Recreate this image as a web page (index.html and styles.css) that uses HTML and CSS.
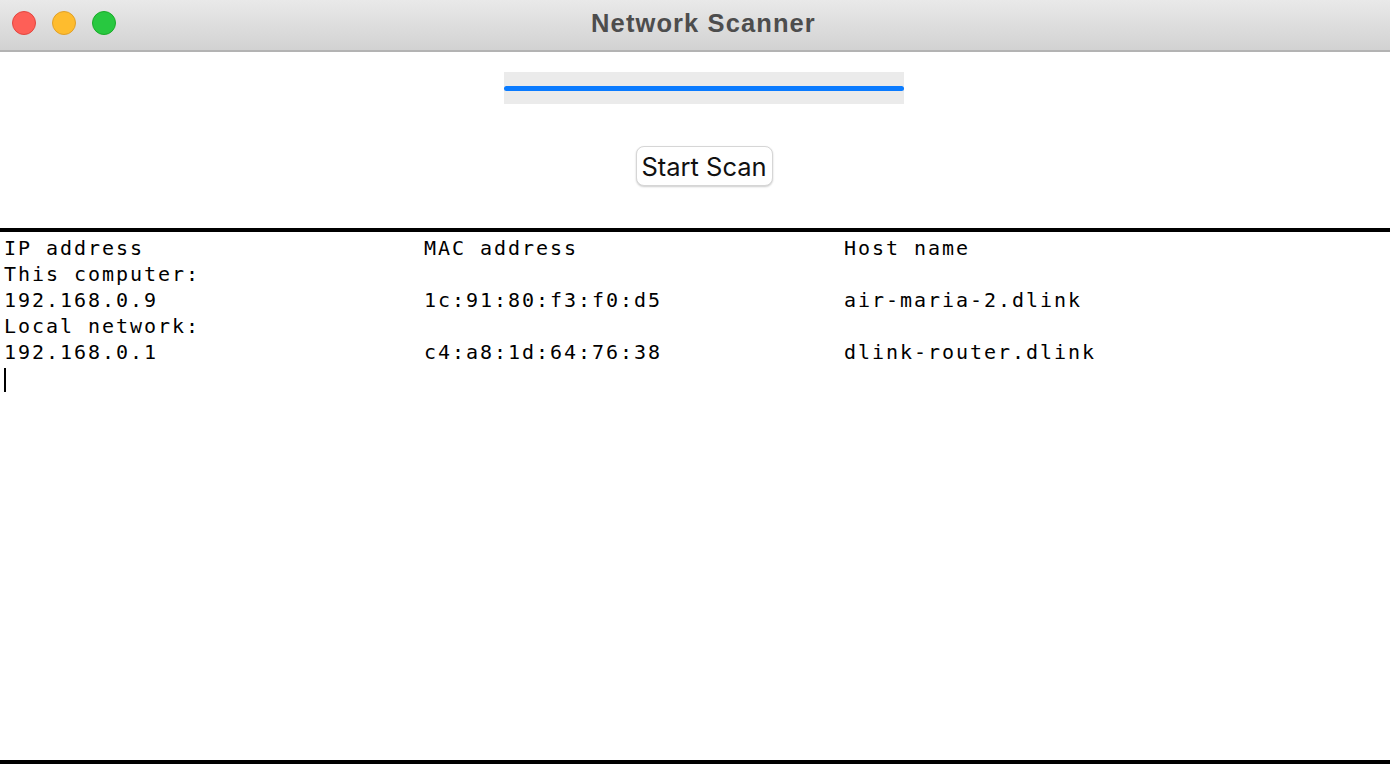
FILE: index.html
```html
<!DOCTYPE html>
<html>
<head>
<meta charset="utf-8">
<link rel="stylesheet" href="styles.css">
</head>
<body>
<div class="window">
  <header class="titlebar">
    <div class="lights">
      <span class="light red"></span>
      <span class="light yellow"></span>
      <span class="light green"></span>
    </div>
    <div class="title">Network Scanner</div>
  </header>
  <section class="controls">
    <div class="progress"><div class="progress-fill"></div></div>
    <button class="scan-btn">Start Scan</button>
  </section>
  <section class="output">
    <div class="row"><span class="col">IP address</span><span class="col">MAC address</span><span class="col">Host name</span></div>
    <div class="row">This computer:</div>
    <div class="row"><span class="col">192.168.0.9</span><span class="col">1c:91:80:f3:f0:d5</span><span class="col">air-maria-2.dlink</span></div>
    <div class="row">Local network:</div>
    <div class="row"><span class="col">192.168.0.1</span><span class="col">c4:a8:1d:64:76:38</span><span class="col">dlink-router.dlink</span></div>
    <div class="row"><span class="cursor"></span></div>
  </section>
</div>
</body>
</html>
```

FILE: styles.css
```css
html, body {
  margin: 0;
  padding: 0;
  background: #ffffff;
}
.window {
  width: 1390px;
  height: 774px;
  display: flex;
  flex-direction: column;
  overflow: hidden;
}
.titlebar {
  height: 50px;
  flex: none;
  position: relative;
  display: flex;
  align-items: center;
  justify-content: center;
  background: linear-gradient(#e9e9e9, #d2d2d2);
  border-bottom: 2px solid #b3b3b3;
}
.lights {
  position: absolute;
  left: 12px;
  top: 11px;
  display: flex;
  gap: 16px;
}
.light {
  width: 24px;
  height: 24px;
  border-radius: 50%;
  box-sizing: border-box;
}
.red { background: #fe5f57; border: 1px solid #e2463f; }
.yellow { background: #febc2e; border: 1px solid #e0a028; }
.green { background: #28c840; border: 1px solid #1aab29; }
.title {
  font-family: "Liberation Sans", Arial, sans-serif;
  font-weight: bold;
  font-size: 25.5px;
  letter-spacing: 1.1px;
  color: #4d4d4d;
  margin-left: 17px;
  margin-bottom: 4px;
}
.controls {
  flex: none;
  height: 180px;
  display: flex;
  flex-direction: column;
  align-items: center;
  padding: 20px 0 0 18px;
  box-sizing: border-box;
  border-bottom: 4px solid #000;
}
.progress {
  width: 400px;
  height: 32px;
  background: #ebebeb;
  display: flex;
  align-items: center;
}
.progress-fill {
  width: 100%;
  height: 5px;
  border-radius: 3px;
  background: #0a7bff;
}
.scan-btn {
  margin-top: 42px;
  height: 40px;
  width: 137px;
  padding: 0;
  background: #fff;
  border: 1px solid #d6d6d6;
  border-radius: 8px;
  box-shadow: 0 1px 2px rgba(0,0,0,0.2);
  font-family: "Inter", "Liberation Sans", Arial, sans-serif;
  font-size: 25.5px;
  color: #111;
}
.output {
  flex: 1;
  padding: 3px 0 0 4px;
  font-family: "DejaVu Sans Mono", monospace;
  font-size: 20px;
  letter-spacing: 1.96px;
  color: #000;
  border-bottom: 4px solid #000;
  margin-bottom: 10px;
}
.row {
  height: 26px;
  line-height: 26px;
  display: flex;
  white-space: pre;
}
.col {
  width: 420px;
}
.cursor {
  display: block;
  width: 2px;
  height: 24px;
  margin-top: 3px;
  background: #000;
}
```
